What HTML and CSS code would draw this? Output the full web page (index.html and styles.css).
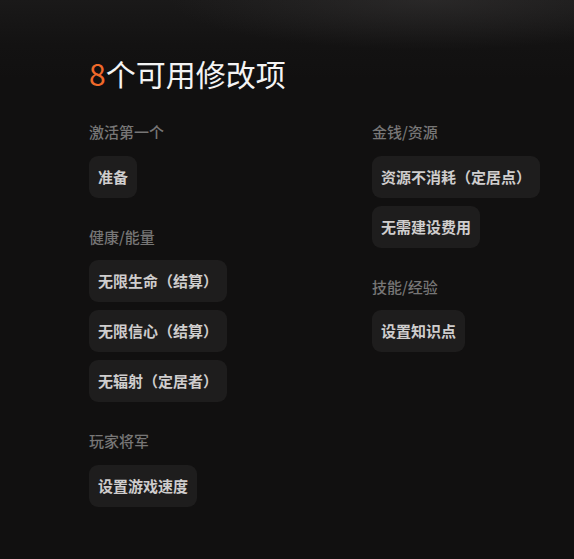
FILE: index.html
```html
<!DOCTYPE html>
<html lang="zh-CN">
<head>
<meta charset="utf-8">
<link rel="stylesheet" href="styles.css">
</head>
<body>
<main class="page">
  <h1 class="title"><span class="count">8</span>个可用修改项</h1>
  <div class="columns">
    <div class="col">
      <section class="group">
        <div class="label">激活第一个</div>
        <div class="list">
          <button class="item">准备</button>
        </div>
      </section>
      <section class="group">
        <div class="label">健康/能量</div>
        <div class="list">
          <button class="item">无限生命（结算）</button>
          <button class="item">无限信心（结算）</button>
          <button class="item">无辐射（定居者）</button>
        </div>
      </section>
      <section class="group">
        <div class="label">玩家将军</div>
        <div class="list">
          <button class="item">设置游戏速度</button>
        </div>
      </section>
    </div>
    <div class="col">
      <section class="group">
        <div class="label">金钱/资源</div>
        <div class="list">
          <button class="item">资源不消耗（定居点）</button>
          <button class="item">无需建设费用</button>
        </div>
      </section>
      <section class="group">
        <div class="label">技能/经验</div>
        <div class="list">
          <button class="item">设置知识点</button>
        </div>
      </section>
    </div>
  </div>
</main>
</body>
</html>
```

FILE: styles.css
```css
html, body {
  margin: 0;
  padding: 0;
}
body {
  width: 574px;
  height: 559px;
  overflow: hidden;
  background:
    radial-gradient(ellipse 260px 50px at 430px 0px, rgba(60,58,58,0.45), rgba(60,58,58,0) 100%),
    linear-gradient(to bottom, #1a1919 0px, #131212 45px, #111010 80px, #111010 100%);
  font-family: "Noto Sans CJK SC", "Noto Sans", sans-serif;
}
.page {
  padding: 53px 0 0 89px;
}
.title {
  margin: 0;
  font-size: 30px;
  line-height: 40px;
  font-weight: 400;
  color: #f4f4f4;
}
.count {
  color: #f0692a;
}
.columns {
  display: grid;
  grid-template-columns: 283px 1fr;
  margin-top: 28px;
}
.col {
  display: flex;
  flex-direction: column;
  gap: 28px;
  align-items: flex-start;
}
.group {
  display: flex;
  flex-direction: column;
  align-items: flex-start;
}
.label {
  font-size: 15px;
  line-height: 21px;
  font-weight: 500;
  color: #777676;
  margin-bottom: 13.5px;
}
.list {
  display: flex;
  flex-direction: column;
  align-items: flex-start;
  gap: 8px;
}
.item {
  font-family: inherit;
  font-size: 15px;
  line-height: 20px;
  font-weight: 700;
  color: #cfcdcd;
  background: #1e1d1d;
  border: none;
  border-radius: 9px;
  padding: 11px 9px;
  margin: 0;
  cursor: pointer;
}
```
